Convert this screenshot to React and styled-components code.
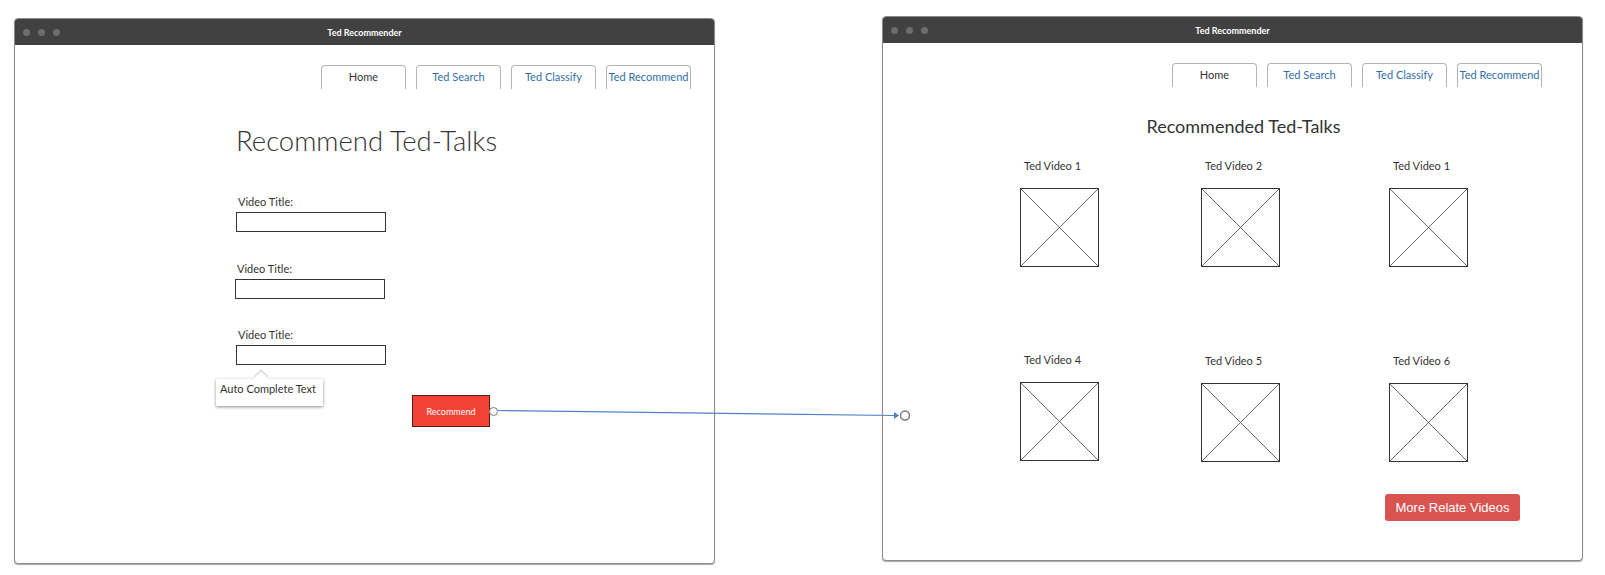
import React from 'react';
import styled, { createGlobalStyle } from 'styled-components';

const GlobalStyle = createGlobalStyle`
  body {
    margin: 0;
    background: #ffffff;
    font-family: Lato, "Open Sans", sans-serif;
  }
`

const Page = styled.div`
  position: relative;
  display: flex;
  align-items: flex-start;
  gap: 167px;
  padding-left: 14px;
  width: 1605px;
  height: 575px;
  box-sizing: border-box;
`

const Window = styled.div`
  display: flex;
  flex-direction: column;
  width: 701px;
  height: ${p => p.h}px;
  margin-top: ${p => p.top}px;
  border: 1px solid #8c8c8c;
  border-radius: 4px;
  box-shadow: 0 1px 1px rgba(0, 0, 0, 0.35);
  box-sizing: border-box;
  overflow: hidden;
  background: #fff;
`

const TitleBar = styled.div`
  display: grid;
  grid-template-columns: 1fr auto 1fr;
  align-items: center;
  height: 26px;
  flex-shrink: 0;
  background: #414141;
`

const Dots = styled.div`
  display: flex;
  gap: 8px;
  padding-left: 8px;
`

const Dot = styled.span`
  width: 7px;
  height: 7px;
  border-radius: 50%;
  background: #6d6d6d;
`

const Title = styled.div`
  color: #ffffff;
  font-size: 9px;
  font-weight: 700;
`

const TabRow = styled.div`
  display: flex;
  justify-content: flex-end;
  gap: 10px;
  margin-top: 20px;
  padding-right: ${p => p.right}px;
`

const Tab = styled.div`
  width: 85px;
  height: 24px;
  display: flex;
  align-items: center;
  justify-content: center;
  padding-bottom: 2px;
  border: 1px solid #b4b4b4;
  border-bottom: none;
  border-radius: 4px 4px 0 0;
  box-sizing: border-box;
  font-size: 11px;
  color: ${p => (p.active ? '#333333' : '#2f6ea8')};
`

const Form = styled.div`
  display: flex;
  flex-direction: column;
  align-items: flex-start;
  padding-left: 221px;
`

const Heading = styled.h1`
  margin: 36px 0 0;
  font-size: 27.5px;
  line-height: 32px;
  font-weight: 300;
  color: #333333;
`

const Field = styled.div`
  display: flex;
  flex-direction: column;
  margin-top: ${p => p.gap}px;
`

const Label = styled.span`
  font-size: 11px;
  line-height: 14px;
  color: #333;
  padding-left: ${p => p.indent || 0}px;
  margin-bottom: 3px;
`

const Input = styled.div`
  width: 150px;
  height: 20px;
  border: 1px solid #333;
  box-sizing: border-box;
  margin-left: ${p => p.shift || 0}px;
`

const ActionRow = styled.div`
  display: flex;
  align-items: flex-start;
  gap: 89px;
  margin: 14px 0 0 -20px;
`

const Tooltip = styled.div`
  position: relative;
  width: 107px;
  height: 27px;
  padding: 3px 0 0 4px;
  box-sizing: border-box;
  font-size: 11px;
  color: #333;
  background: #fff;
  box-shadow: 0 1px 3px rgba(0, 0, 0, 0.45);

  &::before {
    content: '';
    position: absolute;
    left: 40px;
    top: -6px;
    width: 10px;
    height: 10px;
    background: #fff;
    transform: rotate(45deg);
    box-shadow: -1px -1px 1px rgba(0, 0, 0, 0.2);
  }
`

const RedButton = styled.div`
  position: relative;
  margin-top: 16px;
  width: 78px;
  height: 32px;
  display: flex;
  align-items: center;
  justify-content: center;
  background: #f44336;
  border: 1px solid #5c1a16;
  box-sizing: border-box;
  color: #fff;
  font-size: 9px;

  &::after {
    content: '';
    position: absolute;
    right: -9px;
    top: 11px;
    width: 7px;
    height: 7px;
    border: 1.5px solid #7a7a7a;
    border-radius: 50%;
    background: #fff;
  }
`

const Center = styled.h2`
  margin: 27px 0 0;
  padding-left: 22px;
  text-align: center;
  font-size: 18px;
  line-height: 24px;
  font-weight: 400;
  color: #333;
`

const Grid = styled.div`
  display: grid;
  grid-template-columns: 181px 188px 79px;
  row-gap: 86px;
  margin-top: 21px;
  padding-left: 137px;
`

const Cell = styled.div`
  display: flex;
  flex-direction: column;
  padding-top: ${p => p.nudge || 0}px;
`

const VideoLabel = styled.span`
  font-size: 11px;
  line-height: 14px;
  color: #333;
  padding-left: 4px;
  margin-bottom: 15px;
  white-space: nowrap;
`

const Thumb = styled.svg`
  display: block;
  width: 79px;
  height: 79px;
`

const Footer = styled.div`
  display: flex;
  justify-content: flex-end;
  padding-right: 62px;
  margin-top: 32px;
`

const MoreButton = styled.div`
  width: 135px;
  height: 27px;
  display: flex;
  align-items: center;
  justify-content: center;
  border-radius: 3px;
  background: #d9534f;
  color: #fff;
  font-family: "Liberation Sans", Arial, sans-serif;
  font-size: 13px;
`

const Connector = styled.svg`
  position: absolute;
  left: 0;
  top: 0;
  pointer-events: none;
`

const tabs = ['Home', 'Ted Search', 'Ted Classify', 'Ted Recommend']

function Chrome() {
  return (
    <TitleBar>
      <Dots><Dot /><Dot /><Dot /></Dots>
      <Title>Ted Recommender</Title>
      <div />
    </TitleBar>
  )
}

function Tabs({ right }) {
  return (
    <TabRow right={right}>
      {tabs.map((t, i) => <Tab key={t} active={i === 0}>{t}</Tab>)}
    </TabRow>
  )
}

const videos = [
  { name: 'Ted Video 1' },
  { name: 'Ted Video 2' },
  { name: 'Ted Video 1' },
  { name: 'Ted Video 4' },
  { name: 'Ted Video 5', nudge: 1 },
  { name: 'Ted Video 6', nudge: 1 },
]

function App() {
  return (
    <Page>
      <GlobalStyle />

      <Window h={546} top={18}>
        <Chrome />
        <Tabs right={23} />
        <Form>
          <Heading>Recommend Ted-Talks</Heading>
          <Field gap={38}>
            <Label indent={2}>Video Title:</Label>
            <Input />
          </Field>
          <Field gap={30}>
            <Label indent={1}>Video Title:</Label>
            <Input shift={-1} />
          </Field>
          <Field gap={29}>
            <Label indent={2}>Video Title:</Label>
            <Input />
          </Field>
          <ActionRow>
            <Tooltip>Auto Complete Text</Tooltip>
            <RedButton>Recommend</RedButton>
          </ActionRow>
        </Form>
      </Window>

      <Window h={545} top={16}>
        <Chrome />
        <Tabs right={40} />
        <Center>Recommended Ted-Talks</Center>
        <Grid>
          {videos.map((v, i) => (
            <Cell key={i} nudge={v.nudge}>
              <VideoLabel>{v.name}</VideoLabel>
              <Thumb viewBox="0 0 79 79">
                <rect x="0.5" y="0.5" width="78" height="78" fill="#fff" stroke="#333" />
                <line x1="0.5" y1="0.5" x2="78.5" y2="78.5" stroke="#444" strokeWidth="0.8" />
                <line x1="78.5" y1="0.5" x2="0.5" y2="78.5" stroke="#444" strokeWidth="0.8" />
              </Thumb>
            </Cell>
          ))}
        </Grid>
        <Footer>
          <MoreButton>More Relate Videos</MoreButton>
        </Footer>
      </Window>

      <Connector width="1605" height="575">
        <line x1="498" y1="410.5" x2="894" y2="415.5" stroke="#4f7fc7" strokeWidth="1.2" />
        <path d="M894 412 L899 415.5 L894 419 Z" fill="#4f7fc7" />
        <circle cx="905" cy="415.5" r="4.5" fill="#fff" stroke="#7a7a7a" strokeWidth="1.5" />
      </Connector>
    </Page>
  )
}

export default App;
